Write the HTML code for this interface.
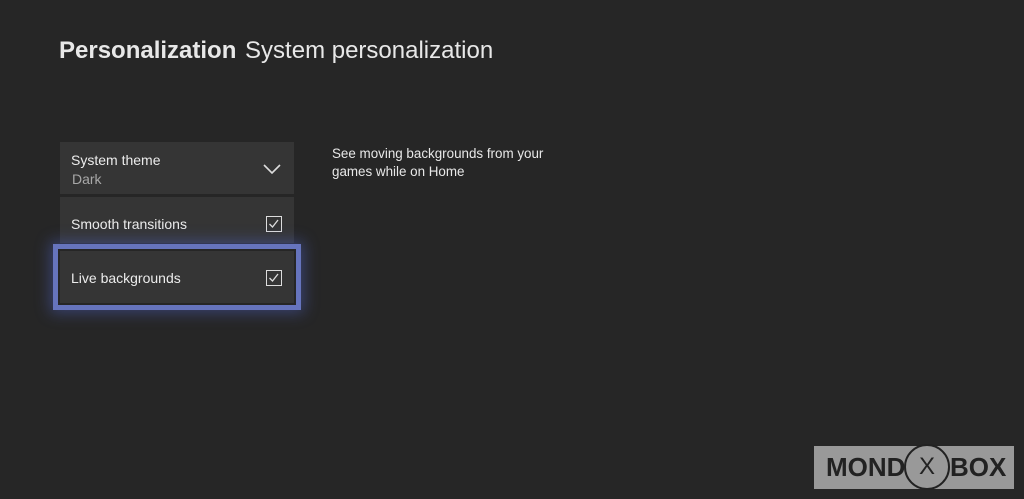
<!DOCTYPE html>
<html><head><style>
body{margin:0;width:1024px;height:499px;background:#262626;overflow:hidden;position:relative;font-family:"Liberation Sans",sans-serif;color:#e8e8e8}
.t{position:absolute;background:#353535}
.lab{position:absolute;left:11px;font-size:14px;color:#ececec}
.cb{position:absolute;right:12px;width:16px;height:16px;border:1.5px solid #ddd;box-sizing:border-box}
</style></head><body>
<div style="position:absolute;left:59px;top:37px;font-size:24px"><b>Personalization</b> <span style="font-weight:normal;margin-left:2px">System personalization</span></div>
<div class="t" style="left:60px;top:142px;width:234px;height:52px">
<div class="lab" style="top:10px">System theme</div>
<div class="lab" style="top:29px;color:#a8a8a8;left:12px">Dark</div>
<svg style="position:absolute;left:203px;top:22px" width="18" height="11"><path d="M1 1L9 9L17 1" stroke="#ddd" stroke-width="1.6" fill="none"/></svg>
</div>
<div class="t" style="left:60px;top:197px;width:234px;height:46px">
<div class="lab" style="top:19px">Smooth transitions</div>
<div class="cb" style="top:19px"><svg width="13" height="13" style="position:absolute;left:0;top:0"><path d="M2.5 7L5.5 10L11 3" stroke="#ddd" stroke-width="1.3" fill="none"/></svg></div>
</div>
<div style="position:absolute;left:53px;top:244px;width:248px;height:66px;border:5px solid #6674bd;box-sizing:border-box;box-shadow:0 0 14px 3px rgba(80,100,200,0.45)"></div>
<div class="t" style="left:60px;top:251px;width:234px;height:52px">
<div class="lab" style="top:19px">Live backgrounds</div>
<div class="cb" style="top:19px"><svg width="13" height="13" style="position:absolute;left:0;top:0"><path d="M2.5 7L5.5 10L11 3" stroke="#ddd" stroke-width="1.3" fill="none"/></svg></div>
</div>
<div style="position:absolute;left:332px;top:145px;font-size:13.4px;line-height:18px;color:#e8e8e8">See moving backgrounds from your<br>games while on Home</div>
<div style="position:absolute;left:814px;top:446px;width:200px;height:43px;background:#999"></div>
<div style="position:absolute;left:826px;top:452px;font-size:26px;font-weight:bold;color:#222;letter-spacing:0px">MOND</div>
<div style="position:absolute;left:904px;top:444px;width:46px;height:46px;border:2px solid #222;border-radius:50%;box-sizing:border-box;text-align:center;line-height:42px;font-size:24px;color:#222">X</div>
<div style="position:absolute;left:950px;top:452px;font-size:26px;font-weight:bold;color:#222">BOX</div>
</body></html>
